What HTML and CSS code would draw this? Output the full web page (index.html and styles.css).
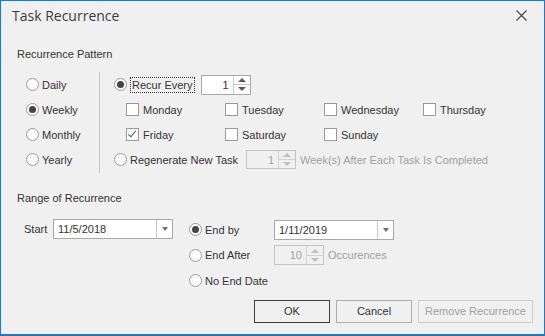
FILE: index.html
```html
<!DOCTYPE html>
<html lang="en">
<head>
<meta charset="UTF-8">
<title>Task Recurrence</title>
<link rel="stylesheet" href="styles.css">
</head>
<body>
<div class="dialog">
  <div class="titlebar">
    <span class="title">Task Recurrence</span>
    <svg class="close" width="11" height="11" viewBox="0 0 11 11">
      <path d="M0.5 0.5 L10.5 10.5 M10.5 0.5 L0.5 10.5" stroke="#4a4a4a" stroke-width="1.2" fill="none"/>
    </svg>
  </div>

  <div class="group-label">Recurrence Pattern</div>
  <div class="pattern">
    <div class="freq">
      <label class="opt"><span class="radio"></span>Daily</label>
      <label class="opt"><span class="radio on"></span>Weekly</label>
      <label class="opt"><span class="radio"></span>Monthly</label>
      <label class="opt"><span class="radio"></span>Yearly</label>
    </div>
    <div class="sep"></div>
    <div class="detail">
      <div class="row">
        <label class="opt"><span class="radio on"></span><span class="focus">Recur Every</span></label>
        <div class="spin recur">
          <span class="val">1</span>
          <span class="btns"><span class="up"></span><span class="down"></span></span>
        </div>
      </div>
      <div class="days">
        <label class="opt"><span class="check"></span>Monday</label>
        <label class="opt"><span class="check"></span>Tuesday</label>
        <label class="opt"><span class="check"></span>Wednesday</label>
        <label class="opt"><span class="check"></span>Thursday</label>
        <label class="opt"><span class="check on"></span>Friday</label>
        <label class="opt"><span class="check"></span>Saturday</label>
        <label class="opt"><span class="check"></span>Sunday</label>
      </div>
      <div class="row">
        <label class="opt"><span class="radio"></span>Regenerate New Task</label>
        <div class="spin regen disabled">
          <span class="val">1</span>
          <span class="btns"><span class="up"></span><span class="down"></span></span>
        </div>
        <span class="muted">Week(s) After Each Task Is Completed</span>
      </div>
    </div>
  </div>

  <div class="group-label range-label">Range of Recurrence</div>
  <div class="range">
    <div class="start">
      <span class="start-label">Start</span>
      <div class="combo">
        <span class="val">11/5/2018</span>
        <span class="drop"></span>
      </div>
    </div>
    <div class="ends">
      <label class="opt"><span class="radio on"></span>End by</label>
      <div class="combo">
        <span class="val">1/11/2019</span>
        <span class="drop"></span>
      </div>
      <label class="opt"><span class="radio"></span>End After</label>
      <div class="after">
        <div class="spin disabled">
          <span class="val">10</span>
          <span class="btns"><span class="up"></span><span class="down"></span></span>
        </div>
        <span class="muted">Occurences</span>
      </div>
      <label class="opt"><span class="radio"></span>No End Date</label>
      <div></div>
    </div>
  </div>

  <div class="buttons">
    <button class="btn default">OK</button>
    <button class="btn">Cancel</button>
    <button class="btn wide" disabled>Remove Recurrence</button>
  </div>
</div>
</body>
</html>
```

FILE: styles.css
```css
body {
margin: 0;
font-family: 'Liberation Sans', Arial, sans-serif;
font-size: 11px;
color: #333;
}
.dialog {
width: 545px;
height: 336px;
box-sizing: border-box;
border: 1px solid #1979d0;
border-bottom-width: 2px;
background: #f0f0f0;
}
.titlebar {
height: 29px;
display: flex;
align-items: center;
justify-content: space-between;
padding: 0 17px 0 11px;
}
.title {
font-family: 'Open Sans', sans-serif;
font-size: 14px;
color: #3c3c3c;
}
.close {
display: block;
}
.group-label {
margin-top: 17px;
padding-left: 16px;
line-height: 14px;
}
.range-label {
margin-top: 18px;
}
.pattern {
display: flex;
margin-top: 11px;
height: 101px;
}
.freq {
width: 73px;
padding-left: 25px;
}
.freq .opt {
height: 25px;
}
.sep {
width: 1px;
background: #c6c6c6;
}
.detail {
padding-left: 14px;
}
.row {
display: flex;
align-items: center;
height: 25px;
}
.opt {
display: flex;
align-items: center;
gap: 3px;
white-space: nowrap;
}
.radio {
width: 11px;
height: 11px;
border: 1px solid #9a9a9a;
border-radius: 50%;
background: #fff;
display: flex;
align-items: center;
justify-content: center;
flex-shrink: 0;
}
.radio.on::after {
content: '';
width: 7px;
height: 7px;
border-radius: 50%;
background: #444;
}
.focus {
outline: 1px dotted #333;
padding: 1px 1px;
margin-left: 1px;
}
.check {
width: 11px;
height: 11px;
border: 1px solid #9a9a9a;
background: #fff;
margin-right: 1px;
position: relative;
flex-shrink: 0;
}
.check.on::after {
content: '';
position: absolute;
left: 3px;
top: 0;
width: 3px;
height: 7px;
border: solid #555;
border-width: 0 1px 1px 0;
transform: rotate(40deg);
}
.days {
display: grid;
grid-template-columns: repeat(4, 99px);
grid-auto-rows: 25px;
align-items: center;
margin-left: 12px;
}
.spin {
display: flex;
width: 50px;
height: 20px;
box-sizing: border-box;
border: 1px solid #a8a8a8;
background: #fff;
}
.spin .val {
flex: 1;
text-align: right;
padding-right: 4px;
line-height: 18px;
}
.spin .btns {
width: 16px;
border-left: 1px solid #c8c8c8;
display: flex;
flex-direction: column;
}
.spin .up,
.spin .down {
flex: 1;
display: flex;
align-items: center;
justify-content: center;
}
.spin .up {
border-bottom: 1px solid #c8c8c8;
}
.spin .up::after {
content: '';
border: 4px solid transparent;
border-top: 0;
border-bottom: 4px solid #5a5a5a;
}
.spin .down::after {
content: '';
border: 4px solid transparent;
border-bottom: 0;
border-top: 4px solid #5a5a5a;
}
.spin.recur {
margin-left: 7px;
}
.spin.regen {
margin-left: 8px;
height: 19px;
}
.spin.disabled {
background: #f0f0f0;
border-color: #c4c4c4;
color: #a0a0a0;
}
.spin.disabled .btns,
.spin.disabled .up {
border-color: #d4d4d4;
}
.spin.disabled .up::after {
border-bottom-color: #c0c0c0;
}
.spin.disabled .down::after {
border-top-color: #c0c0c0;
}
.muted {
color: #a0a0a0;
margin-left: 4px;
}
.range {
display: flex;
margin-top: 12px;
}
.start {
display: flex;
align-items: center;
height: 23px;
padding-left: 23px;
}
.start-label {
width: 29px;
}
.combo {
display: flex;
width: 120px;
height: 20px;
box-sizing: border-box;
border: 1px solid #a8a8a8;
background: #fff;
}
.combo .val {
flex: 1;
padding-left: 4px;
line-height: 18px;
}
.combo .drop {
width: 15px;
border-left: 1px solid #c8c8c8;
display: flex;
align-items: center;
justify-content: center;
}
.combo .drop::after {
content: '';
border: 3px solid transparent;
border-bottom: 0;
border-top: 4px solid #707070;
}
.ends {
display: grid;
grid-template-columns: 85px 120px;
grid-auto-rows: 25.5px;
align-items: center;
margin-left: 16px;
}
.after {
display: flex;
align-items: center;
}
.buttons {
display: flex;
justify-content: flex-end;
gap: 6px;
margin-top: 6px;
padding-right: 11px;
}
.btn {
width: 76px;
height: 23px;
box-sizing: border-box;
border: 1px solid #adadad;
background: #f0f0f0;
font-family: 'Liberation Sans', Arial, sans-serif;
font-size: 11px;
color: #333;
padding: 0;
}
.btn.default {
border-color: #3c3c3c;
}
.btn.wide {
width: 115px;
}
.btn:disabled {
border-color: #cfcfcf;
color: #a0a0a0;
}
```
